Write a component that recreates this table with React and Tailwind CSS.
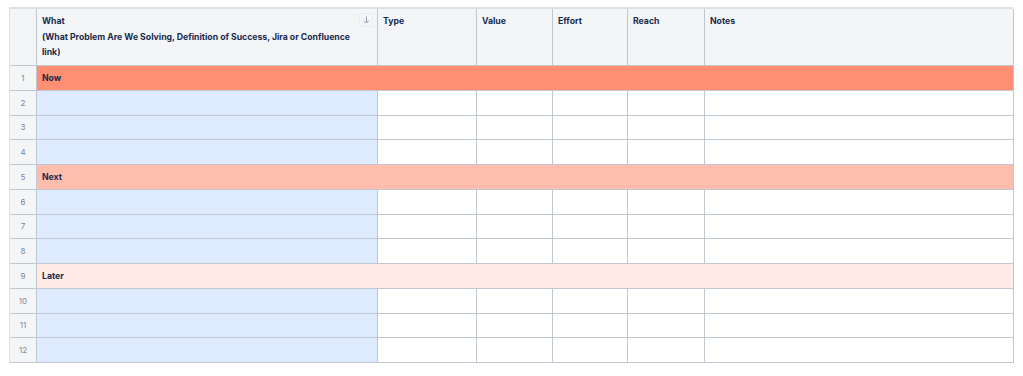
const cols = ['Type', 'Value', 'Effort', 'Reach', 'Notes'];

const rows = [
  { n: 1, label: 'Now', bg: 'bg-[#ff8f73]' },
  { n: 2 },
  { n: 3 },
  { n: 4 },
  { n: 5, label: 'Next', bg: 'bg-[#ffbdad]' },
  { n: 6 },
  { n: 7 },
  { n: 8 },
  { n: 9, label: 'Later', bg: 'bg-[#ffebe6]' },
  { n: 10 },
  { n: 11 },
  { n: 12 },
];

const grid = 'grid grid-cols-[27px_341px_99px_76px_75px_77px_309px]';
const cell = 'border-r border-b border-[#c1c7d0]';

export default function App() {
  return (
    <div className="min-h-screen bg-white pt-[7px] pl-[9px] font-['Inter','Liberation_Sans',sans-serif] text-[#172b4d]">
      <div className="w-[1004px] border-t-2 border-l border-[#dfe1e6]">
        {/* Header */}
        <div className={`${grid} h-[57px] bg-[#f4f5f7]`}>
          <div className={cell} />
          <div className={`${cell} relative pl-[5px] pr-[22px] pt-[5px] text-[8.7px] font-bold leading-[15.5px]`}>
            <div>What</div>
            <div>(What Problem Are We Solving, Definition of Success, Jira or Confluence link)</div>
            <div className="absolute right-[4px] top-[4px] flex h-[14px] w-[14px] items-center justify-center rounded-[2px] border border-[#ebecf0] bg-[#f4f5f7] text-[#97a0af]">
              <svg width="7" height="8" viewBox="0 0 7 8" fill="none" stroke="currentColor" strokeWidth="1">
                <path d="M3.5 0.5v6.5M1.2 4.7L3.5 7l2.3-2.3" />
              </svg>
            </div>
          </div>
          {cols.map((c) => (
            <div key={c} className={`${cell} pl-[5px] pr-[6px] pt-[5px] text-[8.7px] font-bold leading-[15.5px]`}>
              {c}
            </div>
          ))}
        </div>

        {/* Body */}
        {rows.map((r) => (
          <div key={r.n} className={`${grid} h-[24.75px]`}>
            <div className={`${cell} flex items-center justify-center bg-[#f4f5f7] text-[8px] text-[#7a869a]`}>
              {r.n}
            </div>
            {r.label ? (
              <div className={`${cell} col-span-6 flex items-center pl-[5px] pt-[1px] text-[8.7px] font-bold ${r.bg}`}>
                {r.label}
              </div>
            ) : (
              <>
                <div className={`${cell} bg-[#deebff]`} />
                {cols.map((c) => (
                  <div key={c} className={`${cell} bg-white`} />
                ))}
              </>
            )}
          </div>
        ))}
      </div>
    </div>
  );
}
